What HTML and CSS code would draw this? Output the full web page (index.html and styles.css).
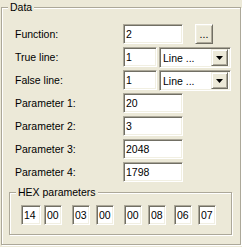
FILE: index.html
```html
<!DOCTYPE html>
<html>
<head>
<meta charset="utf-8">
<link rel="stylesheet" href="styles.css">
</head>
<body>
<div class="group outer">
  <span class="legend">Data</span>
  <div class="form">
    <span class="lbl">Function:</span>
    <div class="ctl">
      <span class="edit w-long">2</span>
      <span class="btn dots">...</span>
    </div>

    <span class="lbl">True line:</span>
    <div class="ctl">
      <span class="edit w-short">1</span>
      <span class="combo">
        <span class="combo-text">Line ...</span>
        <span class="combo-btn"><svg width="7" height="4" viewBox="0 0 7 4"><path d="M0 0h7L3.5 4z" fill="#000"/></svg></span>
      </span>
    </div>

    <span class="lbl">False line:</span>
    <div class="ctl">
      <span class="edit w-short">1</span>
      <span class="combo">
        <span class="combo-text">Line ...</span>
        <span class="combo-btn"><svg width="7" height="4" viewBox="0 0 7 4"><path d="M0 0h7L3.5 4z" fill="#000"/></svg></span>
      </span>
    </div>

    <span class="lbl">Parameter 1:</span>
    <div class="ctl"><span class="edit w-long">20</span></div>

    <span class="lbl">Parameter 2:</span>
    <div class="ctl"><span class="edit w-long">3</span></div>

    <span class="lbl">Parameter 3:</span>
    <div class="ctl"><span class="edit w-long">2048</span></div>

    <span class="lbl">Parameter 4:</span>
    <div class="ctl"><span class="edit w-long">1798</span></div>
  </div>

  <div class="group hex">
    <span class="legend">HEX parameters</span>
    <div class="cells">
      <div class="pair"><span class="edit cell first">14</span><span class="edit cell">00</span></div>
      <div class="pair"><span class="edit cell">03</span><span class="edit cell">00</span></div>
      <div class="pair"><span class="edit cell">00</span><span class="edit cell">08</span></div>
      <div class="pair last"><span class="edit cell">06</span><span class="edit cell">07</span></div>
    </div>
  </div>
</div>
</body>
</html>
```

FILE: styles.css
```css
html, body {
  margin: 0;
  padding: 0;
}

body {
  width: 242px;
  height: 247px;
  overflow: hidden;
  background: #ECE9D8;
  color: #000;
  font-family: "Liberation Sans", Arial, sans-serif;
  font-size: 10.5px;
}

.group {
  position: relative;
  box-sizing: border-box;
  border: 1px solid #ACA899;
  box-shadow: inset 1px 1px 0 #fff, 1px 1px 0 #fff;
}

.legend {
  position: absolute;
  top: -7px;
  left: 6px;
  padding: 0 2px;
  line-height: 13px;
  background: #ECE9D8;
  white-space: nowrap;
}

.outer {
  margin: 7px 0 0 1px;
  width: 240px;
  height: 238px;
  padding: 16px 0 0 7px;
}

.form {
  display: grid;
  grid-template-columns: 108px auto;
  grid-auto-rows: 20px;
  row-gap: 3px;
  padding-left: 6px;
}

.lbl {
  display: flex;
  align-items: center;
  white-space: nowrap;
}

.ctl {
  display: flex;
  align-items: flex-start;
}

.edit {
  box-sizing: border-box;
  height: 20px;
  display: flex;
  align-items: center;
  padding-left: 2px;
  background: #fff;
  border: 1px solid;
  border-color: #ACA899 #fff #fff #ACA899;
  box-shadow: inset 1px 1px 0 #716F64, inset -1px -1px 0 #F1EFE2;
}

.w-long { width: 60px; }
.w-short { width: 34px; }

.btn {
  box-sizing: border-box;
  display: flex;
  align-items: center;
  justify-content: center;
  background: #ECE9D8;
  border: 1px solid;
  border-color: #fff #716F64 #716F64 #fff;
  box-shadow: inset 1px 1px 0 #F1EFE2, inset -1px -1px 0 #ACA899;
}

.dots {
  width: 18px;
  height: 20px;
  margin-left: 12px;
  padding-bottom: 1px;
}

.combo {
  box-sizing: border-box;
  width: 72px;
  height: 21px;
  margin-left: 2px;
  display: flex;
  align-items: center;
  background: #fff;
  border: 1px solid;
  border-color: #ACA899 #fff #fff #ACA899;
  box-shadow: inset 1px 1px 0 #716F64, inset -1px -1px 0 #F1EFE2;
  padding: 2px;
}

.combo-text {
  flex: 1;
  padding-left: 1px;
}

.combo-btn {
  box-sizing: border-box;
  width: 17px;
  height: 17px;
  display: flex;
  align-items: center;
  justify-content: center;
  background: #ECE9D8;
  border: 1px solid;
  border-color: #F1EFE2 #716F64 #716F64 #F1EFE2;
  box-shadow: inset 1px 1px 0 #fff, inset -1px -1px 0 #ACA899;
}

.combo-btn svg {
  display: block;
}

.hex {
  margin-top: 10px;
  width: 223px;
  height: 43px;
  padding: 12px 0 0 11px;
}

.cells {
  display: flex;
  gap: 10px;
}

.pair {
  display: flex;
  gap: 6px;
}

.pair.last {
  margin-left: -2px;
}

.cell {
  width: 18px;
  height: 20px;
}

.cell.first {
  width: 20px;
  margin-right: -3px;
}
```
